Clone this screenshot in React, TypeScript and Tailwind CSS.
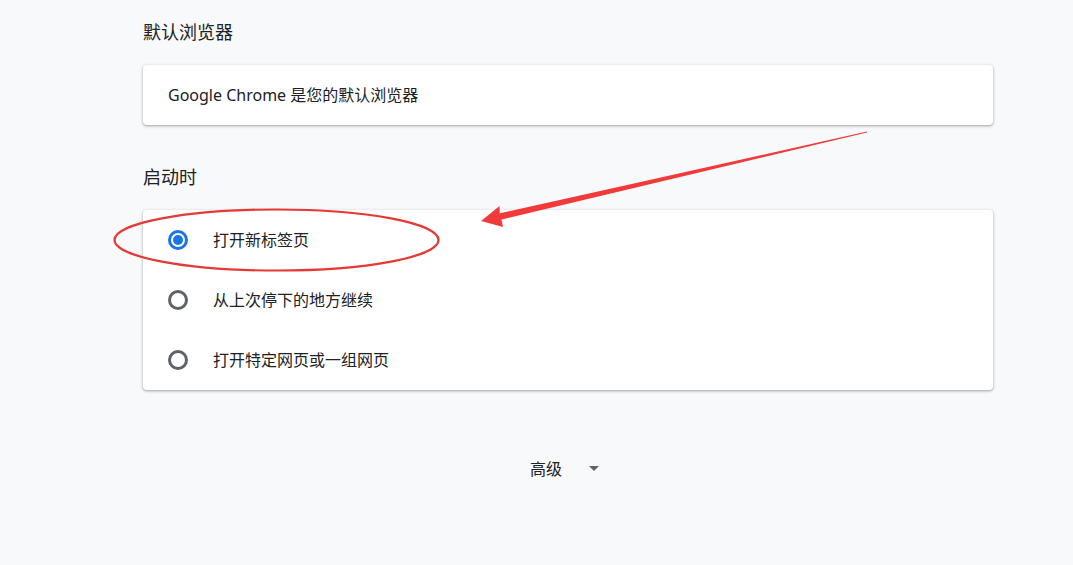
import React from "react";

function Radio({ checked }: { checked?: boolean }) {
  return checked ? (
    <span className="w-[20px] h-[20px] rounded-full border-[3px] border-[#1a73e8] flex items-center justify-center shrink-0">
      <span className="w-[10px] h-[10px] rounded-full bg-[#1a73e8]" />
    </span>
  ) : (
    <span className="w-[20px] h-[20px] rounded-full border-[3px] border-[#5f6368] shrink-0" />
  );
}

export default function App() {
  const options = [
    { label: "打开新标签页", checked: true },
    { label: "从上次停下的地方继续" },
    { label: "打开特定网页或一组网页" },
  ];
  return (
    <div className="relative w-[1073px] h-[565px] overflow-hidden bg-[#f8f9fa] text-[#202124] font-['Noto_Sans','Noto_Sans_CJK_SC',sans-serif]">
      <div className="ml-[143px] w-[850px] flex flex-col">
        <div className="h-[65px] pb-[1px] flex items-center text-[18px] leading-[24px]">默认浏览器</div>
        <div className="h-[60px] bg-white rounded-[4px] shadow-[0_1px_2px_rgba(60,64,67,0.3),0_1px_3px_1px_rgba(60,64,67,0.15)] flex items-center pl-[25px] text-[16px]">
          Google Chrome 是您的默认浏览器
        </div>
        <div className="h-[85px] pt-[40px] text-[18px] leading-[24px]">启动时</div>
        <div className="bg-white rounded-[4px] shadow-[0_1px_2px_rgba(60,64,67,0.3),0_1px_3px_1px_rgba(60,64,67,0.15)] flex flex-col">
          {options.map((o) => (
            <div key={o.label} className="h-[60px] flex items-center pl-[25px] gap-[25px] text-[16px]">
              <Radio checked={o.checked} />
              <span>{o.label}</span>
            </div>
          ))}
        </div>
        <div className="h-[158px] flex items-center justify-center gap-[26px] text-[16px] -translate-x-[3px]">
          <span>高级</span>
          <svg width="12" height="6" viewBox="0 0 12 6">
            <path d="M1 0 L11 0 L6 5 Z" fill="#5f6368" />
          </svg>
        </div>
      </div>
      <svg className="absolute inset-0 pointer-events-none" width="1073" height="565" viewBox="0 0 1073 565">
        <ellipse cx="276.5" cy="240" rx="162" ry="30.5" fill="none" stroke="#e53935" strokeWidth="2.2" />
        <polygon
          points="867,131.6 867,132.4 501.5,219.5 503,227 481,221 499.5,206 499.8,213.2"
          fill="#f23a3a"
        />
      </svg>
    </div>
  );
}
